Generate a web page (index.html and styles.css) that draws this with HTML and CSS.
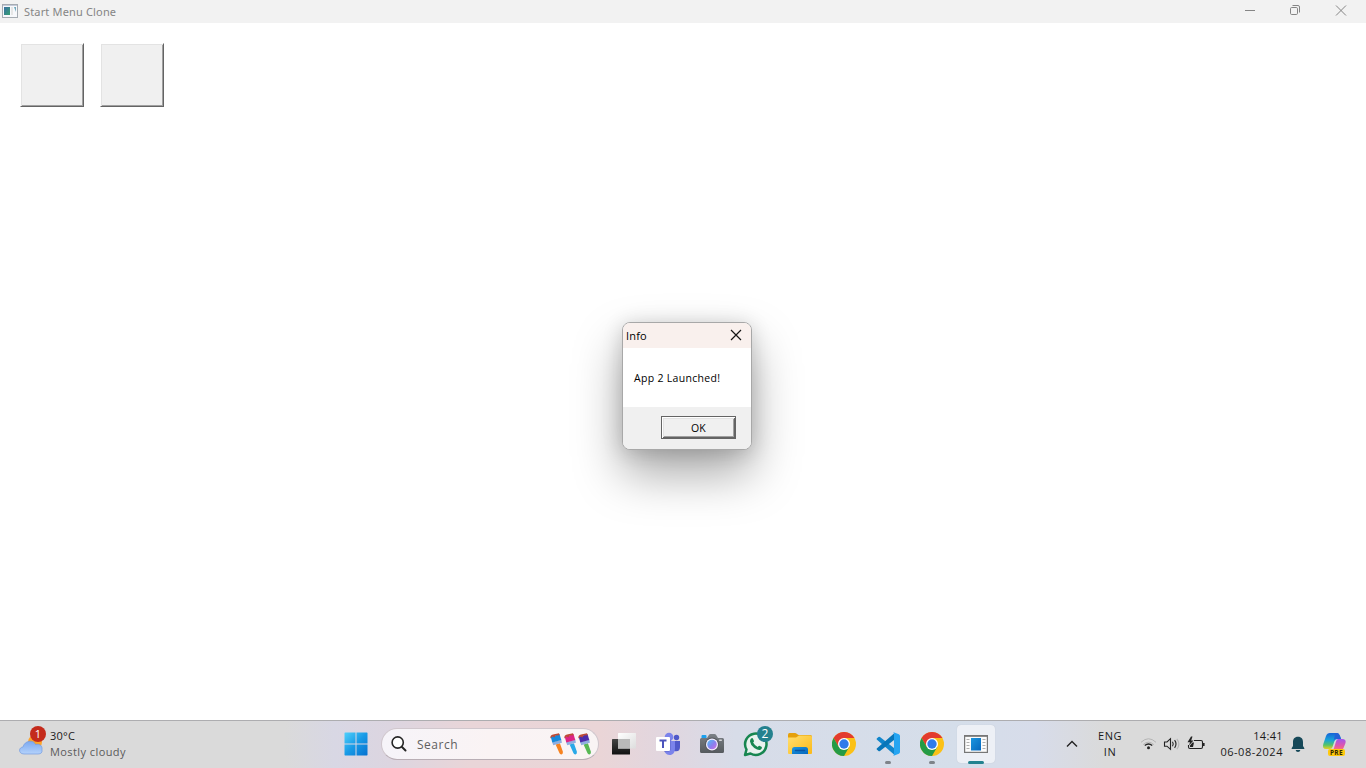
FILE: index.html
```html
<!DOCTYPE html>
<html lang="en">
<head>
<meta charset="utf-8">
<title>Start Menu Clone</title>
<link rel="stylesheet" href="styles.css">
</head>
<body>
<svg class="defs" width="0" height="0" aria-hidden="true">
  <defs>
    <linearGradient id="win" x1="0" y1="0" x2="1" y2="1"><stop offset="0" stop-color="#4fd0fb"/><stop offset=".5" stop-color="#189ae6"/><stop offset="1" stop-color="#0571d0"/></linearGradient>
    <linearGradient id="thumb" x1="0" y1="0" x2="1" y2="1"><stop offset="0" stop-color="#3a6fa5"/><stop offset="1" stop-color="#35a070"/></linearGradient>
    <linearGradient id="dark" x1="0" y1="0" x2="0" y2="1"><stop offset="0" stop-color="#444"/><stop offset="1" stop-color="#111"/></linearGradient>
    <linearGradient id="light" x1="0" y1="0" x2="1" y2="1"><stop offset="0" stop-color="#fff"/><stop offset="1" stop-color="#ddd"/></linearGradient>
    <linearGradient id="cloud" x1="0" y1="0" x2="0" y2="1"><stop offset="0" stop-color="#7ba8f0"/><stop offset="1" stop-color="#b4d2fb"/></linearGradient>
    <linearGradient id="lens" x1="0" y1="0" x2="1" y2="1"><stop offset="0" stop-color="#4cc5f5"/><stop offset=".55" stop-color="#8a7ff0"/><stop offset="1" stop-color="#d56fe0"/></linearGradient>
    <linearGradient id="folder" x1="0" y1="0" x2="1" y2="1"><stop offset="0" stop-color="#ffdf70"/><stop offset="1" stop-color="#fbb917"/></linearGradient>
    <linearGradient id="blue" x1="0" y1="0" x2="1" y2="1"><stop offset="0" stop-color="#1b96df"/><stop offset="1" stop-color="#0767bd"/></linearGradient>
    <linearGradient id="cam" x1="0" y1="0" x2="0" y2="1"><stop offset="0" stop-color="#7c8186"/><stop offset="1" stop-color="#565a5e"/></linearGradient>
    <linearGradient id="cop1" x1="0" y1="0" x2="0" y2="1"><stop offset="0" stop-color="#1763d8"/><stop offset=".45" stop-color="#18a5d8"/><stop offset=".75" stop-color="#55c468"/><stop offset="1" stop-color="#e8d021"/></linearGradient>
    <linearGradient id="cop2" x1="0" y1="0" x2="0" y2="1"><stop offset="0" stop-color="#a255ee"/><stop offset=".55" stop-color="#e557a5"/><stop offset="1" stop-color="#ff8b58"/></linearGradient>
    <symbol id="chrome" viewBox="0 0 24 24">
      <circle cx="12" cy="12" r="12" fill="#fbc116"/>
      <path d="M1.6 6A12 12 0 0 1 22.4 6H12L6.8 15Z" fill="#e33b2e"/>
      <path d="M1.6 6A12 12 0 0 0 12 24L17.2 15 12 12 6.8 15Z" fill="#249b46"/>
      <circle cx="12" cy="12" r="6" fill="#fff"/><circle cx="12" cy="12" r="4.7" fill="#2f7bea"/>
    </symbol>
    <symbol id="brush" viewBox="0 0 14 22">
      <path class="handle" d="M5.6 11.5L9.9 10.3 12.9 18.8Q13.300 20.800 11.500 21.500 9.800 21.600 9.300 19.800Z"/>
      <path d="M2.2 9.3L11.300 6.800 11.900 9.800 3.200 12.300Z" fill="#8eaee0"/>
      <path class="bristle" d="M.7 3.800L9.500 1 11.300 7 2.300 9.600Z"/>
      <path class="tip" d="M.4 5.500Q0 2 3 1.500L9 .3 9.600 2.200 5.500 2.600 4.400 4.600 2.600 3.600Z"/>
    </symbol>
  </defs>
</svg>
<div class="desktop">
  <header class="titlebar">
    <svg class="app-icon" width="16" height="14" viewBox="0 0 16 14"><rect x=".5" y=".5" width="15" height="13" fill="#f7f8fb" stroke="#a5abb2"/><path d="M1 1.500H15" stroke="#c4cad8"/><rect x="2" y="3" width="6" height="8" fill="url(#thumb)"/><rect x="9" y="3" width="2" height="8" fill="#e6e6e6"/><path d="M12 3H14V8Z" fill="#70a9bd"/></svg>
    <span class="title">Start Menu Clone</span>
    <div class="controls">
      <svg width="46" height="22" viewBox="0 0 46 22"><path d="M19 10.500H29" stroke="#858585"/></svg>
      <svg width="46" height="22" viewBox="0 0 46 22"><rect x="18.500" y="7.500" width="7" height="7" rx="1.200" fill="none" stroke="#858585"/><path d="M20.500 5.500H26Q27.500 5.500 27.500 7V12.500" fill="none" stroke="#858585"/></svg>
      <svg width="46" height="22" viewBox="0 0 46 22"><path d="M18 5.500L28 15.500M28 5.500L18 15.500" stroke="#858585"/></svg>
    </div>
  </header>
  <main class="client"><button class="tile"></button><button class="tile"></button></main>
  <footer class="taskbar">
    <div class="weather">
      <svg class="cloud" width="28" height="32" viewBox="0 0 28 32"><circle cx="17" cy="17" r="7" fill="#ffa329"/><path d="M6 29C.500 29 0 22.500 5 22 6.500 15.500 15.500 14 17.500 19.500 22 18.500 24.500 21 24 24.500 24.500 27.500 23 29 20 29Z" fill="url(#cloud)" stroke="#739be0" stroke-width=".7"/></svg>
      <span class="alert">1</span>
      <div class="weather-text"><span>30°C</span><span class="muted">Mostly cloudy</span></div>
    </div>
    <nav class="apps">
      <span class="cell start"><svg width="24" height="24" viewBox="0 0 24 24"><path fill="url(#win)" d="M1 .5H11.500V11.500H.500V1ZM12.500.500H23L23.500 1V11.500H12.500ZM.500 12.500H11.500V23.500H1L.500 23ZM12.500 12.500H23.500V23L23 23.500H12.500Z"/></svg></span>
      <div class="search">
        <svg width="18" height="18" viewBox="0 0 18 18"><circle cx="7.700" cy="7.500" r="5.600" fill="#fff" stroke="#252525" stroke-width="1.600"/><path d="M12 12L15.500 15.500" stroke="#252525" stroke-width="2" stroke-linecap="round"/></svg>
        <span class="search-label">Search</span>
        <span class="brushes"><svg class="b1" width="14" height="22"><use href="#brush"/></svg><svg class="b2" width="14" height="22"><use href="#brush"/></svg><svg class="b3" width="14" height="22"><use href="#brush"/></svg></span>
      </div>
      <span class="cell"><svg width="24" height="24" viewBox="0 0 24 24"><rect y="7" width="18" height="15.500" rx=".6" fill="url(#dark)"/><rect x="6" y="1" width="18" height="15.500" rx=".6" fill="url(#light)"/><rect x="6" y="7" width="12" height="9.500" fill="#b9b9b9"/></svg></span>
      <span class="cell"><svg width="24" height="24" viewBox="0 0 24 24"><circle cx="13" cy="5" r="4.300" fill="#7b83eb"/><circle cx="20.500" cy="5.500" r="2.700" fill="#5059c9"/><path d="M17 9H24V15C24 18.500 22 20 18 19Z" fill="#5059c9"/><path d="M8 9H19V16C19 20.500 17 23 13.500 23S8 20 8 16Z" fill="#7b83eb"/><path d="M13 7L14.500 8V18L13 19.500H8V7Z" fill="#3e449d" opacity=".5"/><rect y="5" width="14" height="14" rx="1" fill="#fff"/><path d="M3.500 8.500H10.500M7 8.500V16" stroke="#4b53bc" stroke-width="2"/></svg></span>
      <span class="cell"><svg width="24" height="24" viewBox="0 0 24 24"><rect x="1.500" y="3" width="5" height="4" rx="1" fill="#1ba0ed"/><path d="M1.500 6H7L9 2.800Q9.500 2 10.500 2H14.500Q15.500 2 16 2.800L18 6H22.500Q24 6 24 7.500V19.500Q24 21 22.500 21H1.500Q0 21 0 19.500V7.500Q0 6 1.500 6Z" fill="url(#cam)"/><circle cx="12" cy="12.500" r="7" fill="#55585e"/><circle cx="12" cy="12.500" r="6" fill="#f5efff"/><circle cx="12" cy="12.500" r="4.800" fill="url(#lens)"/><rect x="19" y="7.500" width="3" height="1.500" rx=".7" fill="#d4d5d8"/></svg></span>
      <span class="cell"><svg width="26" height="26" viewBox="0 0 26 26"><path d="M2 24L3.500 18.500A10.700 10.700 0 1 1 7.500 22.500Z" fill="#e9f2ee" stroke="#178650" stroke-width="2.500" stroke-linejoin="round"/><path d="M8.100 7.500Q9.200 6.500 9.900 7.400L11 9.900Q11.200 10.600 10.100 11.600 11.600 14.600 14.700 15.900 15.900 14.600 16.400 14.700L18.900 16Q19.300 17.800 17.500 18.800 15.500 19.900 11.300 17.100 7.500 14.100 7 10.500 6.900 8.700 8.100 7.500Z" fill="#178650"/></svg><span class="unread">2</span></span>
      <span class="cell"><svg width="24" height="24" viewBox="0 0 24 24"><path d="M0 3Q0 1 1.500 1H7Q8 1 9 2L10.500 3H22.500Q24 3 24 4.500V12H0Z" fill="#e5a00c"/><path d="M0 5.500H8L11 3.500H22.500Q24 3.500 24 5V21Q24 22 23 22H1Q0 22 0 21Z" fill="url(#folder)"/><path d="M4 22V17.500Q4 15 6.500 15H17.500Q20 15 20 17.500V22Z" fill="url(#blue)"/><path d="M7.500 18.500H16.500" stroke="#0a54a4" stroke-width="1.500" stroke-linecap="round"/></svg></span>
      <span class="cell"><svg width="24" height="24"><use href="#chrome"/></svg></span>
      <span class="cell running"><svg width="24" height="24" viewBox="0 0 24 24"><path d="M1 7.700Q0 7 1 6.200L2.500 5Q3.200 4.500 4 5L18 16V22.500Z" fill="#1186cc"/><path d="M1 16.300Q0 17 1 17.800L2.500 19Q3.200 19.500 4 19L18 8V1.500Z" fill="#0876b9"/><path d="M17 0L22.800 2.300Q24 2.800 24 4V20Q24 21.200 22.800 21.700L17 24Q18 23.500 18 22V2Q18 .5 17 0Z" fill="#25a5f2"/></svg></span>
      <span class="cell running"><svg width="24" height="24"><use href="#chrome"/></svg></span>
      <span class="cell active"><svg width="24" height="18" viewBox="0 0 24 18"><rect x=".6" y=".6" width="22.800" height="16.800" fill="#fbfbfb" stroke="#777" stroke-width="1.200"/><path d="M1 1.300H23" stroke="#777"/><rect x="7" y="3" width="10" height="12.500" fill="url(#blue)"/><path d="M2.500 4.500H5.500M2.500 7.500H5.500M2.500 10.500H5.500M2.500 13.500H5.500M18.500 4.500H21.500M18.500 7.500H21.500M18.500 10.500H21.500M18.500 13.500H21.500" stroke="#b0b0b0"/></svg></span>
    </nav>
    <div class="tray">
      <svg class="chevron" width="12" height="8" viewBox="0 0 12 8"><path d="M1 6.500L6 1.500 11 6.500" fill="none" stroke="#222" stroke-width="1.400"/></svg>
      <div class="lang"><span>ENG</span><span>IN</span></div>
      <svg class="status" width="66" height="16" viewBox="0 0 66 16"><g fill="none"><path d="M1 6.300Q8.500-.8 16 6.300M3.200 8.600Q8.500 3.700 13.800 8.600" stroke="#b5b5b5"/><path d="M4.800 9.600Q8.500 6.300 12.200 9.600" stroke="#222" stroke-width="1.300"/></g><circle cx="8.500" cy="11.700" r="1.500" fill="#222"/><g fill="none" stroke="#222" stroke-width="1.100"><path d="M24.500 6H27L30.500 2.700V13.300L27 10.200H24.500Z"/><path d="M32.500 5.700Q34 8 32.500 10.300M34.600 4.200Q37.400 8 34.600 11.800"/><path d="M36.800 2.800Q41 8 36.800 13.200" stroke="#b5b5b5"/><path d="M54 4.500H61Q62.500 4.500 62.500 6V11Q62.500 12.500 61 12.500H50Q48.500 12.500 48.500 11V9"/><path d="M63.800 7V10" stroke-width="1.600"/></g><path d="M51 .5L47.500 6.200H50L49 9.500 53.500 4.500H51.200L52.500.5ZM50 11V9.500L52.500 6.500H54L53 11Z" fill="#222"/></svg>
      <div class="clock"><span>14:41</span><span class="date">06-08-2024</span></div>
      <svg class="bell" width="14" height="17" viewBox="0 0 14 17"><path d="M7 .8C10.500.8 12 3.200 12 6V10L13.400 12.300Q13.500 13 13 13H1Q.500 13 .600 12.300L2 10V6C2 3.200 3.500.8 7 .8ZM4.600 14H9.400Q9 16 7 16T4.600 14Z" fill="#164858"/></svg>
      <span class="copilot"><svg width="26" height="24" viewBox="0 0 26 24"><path d="M8 1H15Q17 1 18 4L19 7H15.500Q13 7 12.300 9.500L10.500 15Q10 17 8 17H4Q0 17 1.300 12L4 4Q5 1 8 1Z" fill="url(#cop1)"/><path d="M15 1Q17 1 18 4L19 7H14Q12 7 11.500 9L13.500 1Z" fill="#2461d7"/><path d="M16 7H20Q24.500 7 23.500 11L21.500 16Q20 20 16 20H8Q11 19.500 12 16L14 9.500Q14.600 7 16 7Z" fill="url(#cop2)"/></svg><span class="pre">PRE</span></span>
    </div>
  </footer>
  <section class="dialog" role="dialog">
    <div class="dialog-head"><span>Info</span><svg width="12" height="12" viewBox="0 0 12 12"><path d="M1 1L11 11M11 1L1 11" stroke="#151515" stroke-width="1.200"/></svg></div>
    <div class="dialog-body">App 2 Launched!</div>
    <div class="dialog-foot"><button class="ok"><span>OK</span></button></div>
  </section>
</div>
</body>
</html>
```

FILE: styles.css
```css
* { box-sizing: border-box; }
body { margin: 0; overflow: hidden; font-family: "Open Sans", "Noto Sans", sans-serif; font-size: 11px; color: #1a1a1a; }
svg { display: block; flex: none; }
.defs { position: absolute; }
.desktop { position: relative; display: flex; flex-direction: column; width: 1366px; height: 768px; background: #fff; }
.titlebar { display: flex; align-items: center; height: 23px; flex: none; padding-left: 2px; background: #f2f2f2; color: #858585; }
.app-icon { margin-top: -1px; }
.title { margin-left: 6px; font-family: "Noto Sans", sans-serif; font-size: 11px; letter-spacing: .16px; white-space: nowrap; }
.controls { display: flex; align-self: flex-start; margin-left: auto; height: 22px; margin-right: 2px; }
.client { display: flex; flex: 1; gap: 16px; padding: 20px; align-items: flex-start; }
.tile { width: 64px; height: 64px; padding: 0; background: #f0f0f0; border: 1px solid; border-color: #fff #646464 #646464 #fff; box-shadow: inset 1px 1px #e3e3e3, inset -1px -1px #a0a0a0; }
.taskbar { display: flex; flex: none; height: 48px; border-top: 1px solid #adadb0; background: linear-gradient(90deg, #dadada 0, #dadada 285px, #d8d7e4 335px, #dcd5e0 390px, #e9d5d8 470px, #ead5d7 600px, #e1d6df 665px, #d7dce8 735px, #d5deea 960px, #d7dcea 1035px, #dadada 1105px, #dadada 100%); }
.weather { position: relative; display: flex; width: 333px; padding-left: 18px; }
.cloud { margin-top: 4px; }
.alert { position: absolute; left: 30px; top: 5px; width: 16px; height: 16px; border-radius: 50%; background: #c42b1c; color: #fff; text-align: center; line-height: 16px; }
.weather-text { display: flex; flex-direction: column; margin: 7px 0 0 4px; line-height: 16px; white-space: nowrap; }
.weather-text span:first-child { letter-spacing: .25px; }
.muted { color: #5b5b5b; letter-spacing: .42px; }
.apps { display: flex; align-items: center; height: 46px; }
.cell { position: relative; display: flex; align-items: center; justify-content: center; width: 44px; height: 38px; }
.start { padding-left: 1px; }
.search { display: flex; align-items: center; width: 218px; height: 32px; margin: 0 3px 0 4px; padding: 0 6px 0 8px; border: 1px solid #d0c7cd; border-bottom-color: #b9aeb5; border-radius: 16px; background: linear-gradient(90deg, #f6f4f9, #faf3f4 50%, #f9f4f4); }
.search-label { margin-left: 9px; font-size: 12px; letter-spacing: .5px; color: #606060; }
.brushes { display: flex; margin-left: auto; }
.b1 { fill: #f78320; color: #1689dc; }
.b2 { fill: #29a9e8; color: #dc2485; }
.b3 { fill: #57b854; color: #4b2dac; }
.bristle { fill: currentColor; }
.tip { fill: #bd4a35; }
.b2 .tip { fill: #d99b2c; }
.unread { position: absolute; left: 23px; top: 1px; width: 16px; height: 16px; border-radius: 50%; background: #24818e; color: #fff; font-size: 12px; line-height: 16px; text-align: center; }
.running::after, .active::after { content: ""; position: absolute; bottom: 0; left: 19px; width: 6px; height: 3px; border-radius: 2px; background: #7e8389; transform: translateY(1px); }
.active { width: 38px; margin-left: 3px; border-radius: 4px; background: #edf0f6; box-shadow: 0 0 1px #b6bdc9; }
.active::after { left: 11px; width: 16px; background: #22828f; }
.tray { display: flex; align-items: center; margin-left: auto; padding-right: 18px; height: 46px; }
.lang { display: flex; flex-direction: column; width: 32px; margin: 0 14px 0 16px; text-align: center; line-height: 16px; letter-spacing: .5px; }
.clock { display: flex; flex-direction: column; width: 77px; line-height: 16px; text-align: right; white-space: nowrap; letter-spacing: .35px; }
.date { letter-spacing: .52px; }
.bell { margin-left: 8px; }
.copilot { position: relative; margin-left: 17px; }
.pre { position: absolute; left: 6px; bottom: 0; width: 17px; height: 7px; border-radius: 2px; background: #ffc90d; color: #332600; font-size: 6.500px; font-weight: 700; line-height: 7px; text-align: center; letter-spacing: .4px; }
.dialog { position: absolute; left: 622px; top: 322px; width: 130px; height: 128px; display: flex; flex-direction: column; overflow: hidden; border: 1px solid #a8a8a8; border-radius: 8px; background: #fff; color: #000; box-shadow: 0 24px 48px rgba(0,0,0,.34), 0 2px 20px rgba(0,0,0,.16); }
.dialog-head { display: flex; align-items: center; justify-content: space-between; height: 25px; padding: 0 9px 0 3px; background: #f9f0ed; letter-spacing: .2px; }
.dialog-head svg { margin-top: -1px; }
.dialog-body { flex: 1; padding: 21px 0 0 11px; font-size: 10.500px; line-height: 18px; letter-spacing: .3px; white-space: nowrap; }
.dialog-foot { display: flex; justify-content: flex-end; height: 42px; padding: 9px 15px 0 0; background: #f0f0f0; }
.ok { width: 75px; height: 23px; padding: 0; border: 1px solid #646464; background: #f0f0f0; color: #000; font: 10.500px "Open Sans", sans-serif; letter-spacing: .2px; box-shadow: inset 1px 1px #fff, inset -1px -1px #646464, inset 2px 2px #e3e3e3, inset -2px -2px #a0a0a0; }
```
